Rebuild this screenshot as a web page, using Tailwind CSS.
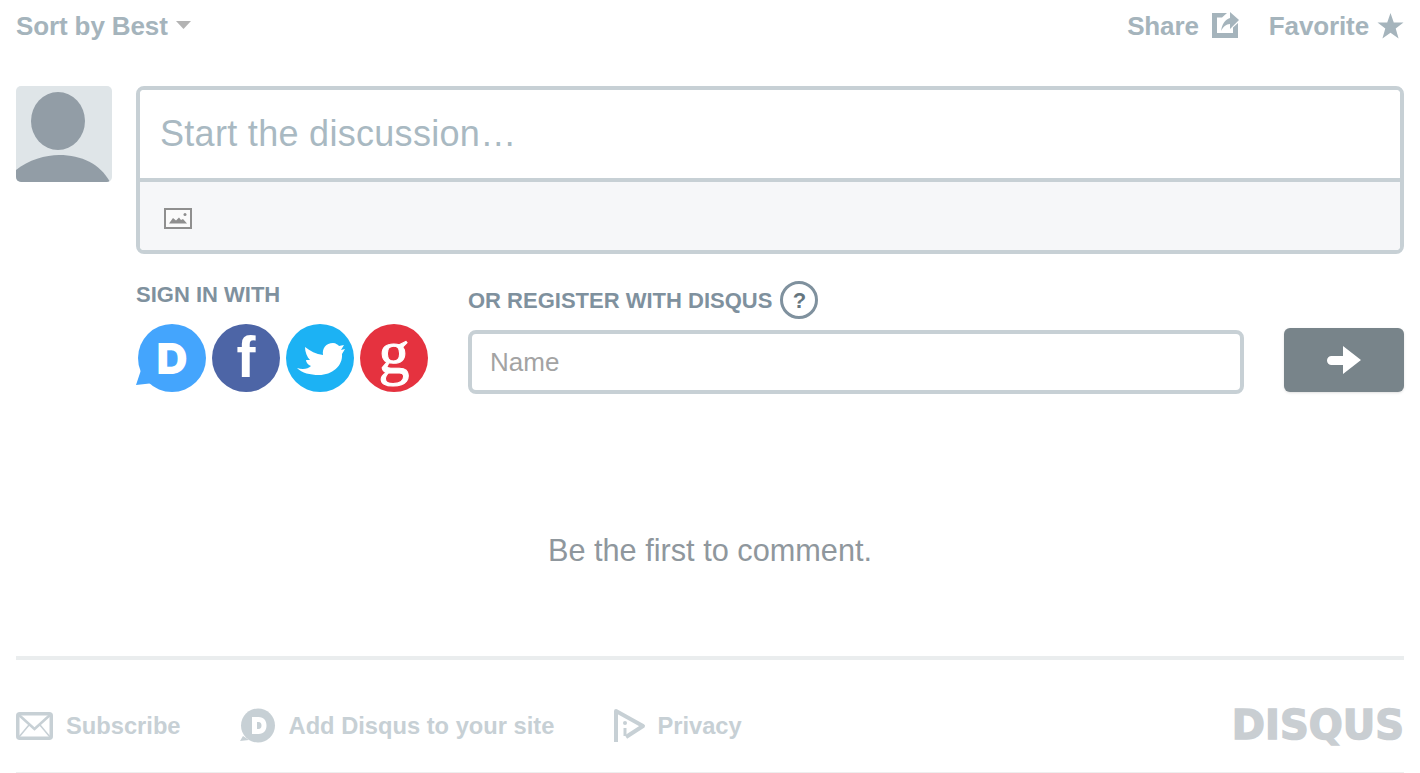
<!DOCTYPE html>
<html lang="en"><head><meta charset="utf-8"><title>Disqus</title>
<script src="https://cdn.jsdelivr.net/npm/@tailwindcss/browser@4"></script></head>
<body class="bg-white h-[773px] overflow-hidden font-['Liberation_Sans',Arial,sans-serif]">
<div class="px-4 w-[1420px] h-[773px] flex flex-col">
  <!-- top nav -->
  <div class="flex justify-between items-center h-[50px] pt-[1px] shrink-0 text-[26px] leading-[30px] font-bold text-[#a5b4bc] mb-9 tracking-[-0.12px]">
    <div class="flex items-center gap-[8px]"><span>Sort by Best</span><svg class="mt-[-1px]" width="15" height="8" viewBox="0 0 15 8"><path d="M0 0H15L7.500 8Z" fill="#b3b3b3"/></svg></div>
    <div class="flex items-center">
      <span>Share</span>
      <svg class="ml-[13px] mt-[-2px]" width="27" height="26" viewBox="0 0 27 26" fill="#a5b4bc"><path d="M0 1H15L10 5.500H5V21H21V15.500L26 11V26H0Z"/><path d="M18 0L27 8L18 17V12C14 12 11 15 9 19C10 12 13 7.500 18 6Z"/></svg>
      <span class="ml-[30px]">Favorite</span>
      <svg class="ml-[8px]" width="27" height="26" viewBox="0 0 28 27" fill="#a5b4bc"><path d="M14 0L17.400 9.800H27.500L19.400 16.200L22.400 26.500L14 20.500L5.600 26.500L8.600 16.200L.5 9.800H10.600Z"/></svg>
    </div>
  </div>
  <!-- composer -->
  <div class="flex gap-6 shrink-0">
    <div class="w-24 h-24 rounded-[5px] bg-[#dfe5e8] overflow-hidden shrink-0">
      <svg width="96" height="96" viewBox="0 0 96 96" fill="#929da6"><ellipse cx="42" cy="35" rx="27" ry="29"/><path d="M0 84C12 74 30 69 43 69C66 69 84 78 94 96H0Z"/></svg>
    </div>
    <div class="flex-1 min-w-0">
      <div class="border-4 border-[#c7d0d5] rounded-[8px] h-[168px] flex flex-col overflow-hidden">
        <div class="bg-white border-b-4 border-[#c7d0d5] box-content h-[88px] flex items-center pl-5 text-[36px] text-[#a9b9c2] leading-none tracking-[0.3px]">Start the discussion…</div>
        <div class="flex-1 bg-[#f6f7f9] flex items-center pl-[24px] pt-1">
          <svg width="28" height="21" viewBox="0 0 28 21"><rect x="1" y="1" width="26" height="19" fill="#fbfbfb" stroke="#8f8f8f" stroke-width="2"/><path d="M5 15.500L9 10L12 12.500L15 9.500L17 12L19 11L23 15.500Z" fill="#8f8f8f"/><circle cx="21" cy="6.500" r="1.500" fill="#8f8f8f"/></svg>
        </div>
      </div>
      <div class="flex mt-[24px]">
        <div class="w-[332px] shrink-0">
          <div class="text-[22px] leading-[32px] font-bold text-[#7f919e] h-[45px] mt-px">SIGN IN WITH</div>
          <div class="flex gap-1.5 pl-0.5">
            <div class="relative w-[68px] h-[68px] rounded-full bg-[#44a5fd] text-white flex items-center justify-center font-['Inter',sans-serif] font-black text-[43px] leading-none">
              <svg class="absolute left-[-2px] bottom-[6px]" width="20" height="16" viewBox="0 0 20 16" fill="#44a5fd"><path d="M5 0L0 15L18 13Z"/></svg>
              <span class="relative">D</span>
            </div>
            <div class="w-[68px] h-[68px] rounded-full bg-[#4d65a6] text-white flex items-center justify-center font-bold text-[57px] leading-none pb-[1px]">f</div>
            <div class="w-[68px] h-[68px] rounded-full bg-[#1cb2f4]">
              <svg width="68" height="68" viewBox="0 0 68 68" fill="#fff"><path d="M11 44C17 46 22 45 25 42C22 41 20 38 20 36C21 36 22 36 24 36C21 33 19 28 19 23C24 27 30 30 37 31C36 24 40 19 47 19C50 19 52 21 53 22L58 21L55 26L59 25L56 30C57 42 46 51 33 51C24 51 16 49 11 44Z"/></svg>
            </div>
            <div class="w-[68px] h-[68px] rounded-full bg-[#e5323f] text-white flex items-center justify-center font-['Liberation_Serif',serif] font-normal text-[62px] leading-none pb-3 [-webkit-text-stroke:1px_white]">g</div>
          </div>
        </div>
        <div class="flex-1 min-w-0 pt-[5px]">
          <div class="flex items-center h-[34px] text-[22px] font-bold text-[#7f919e]">OR REGISTER WITH DISQUS
            <span class="ml-2 w-[38px] h-[38px] rounded-full border-[3.500px] border-[#7f919e] flex items-center justify-center text-[22px] text-[#66767f]">?</span>
          </div>
          <div class="flex gap-10 mt-[11px]">
            <div class="flex-1 h-[64px] mt-0.5 border-4 border-[#c7d0d5] rounded-[8px] flex items-center pl-[18px] text-[26px] text-[#a3a3a3] bg-white">Name</div>
            <div class="w-[120px] h-[64px] rounded-[6px] bg-[#78848a] flex items-center justify-center shadow-sm">
              <svg width="34" height="28" viewBox="0 0 34 28" fill="#fff"><path d="M16 0L34 14L16 28V19H4.500A4.500 4.500 0 0 1 4.500 10H16Z"/></svg>
            </div>
          </div>
        </div>
      </div>
    </div>
  </div>
  <!-- empty -->
  <div class="text-center text-[30.700px] leading-[36px] text-[#8f979d] mt-[139px]">Be the first to comment.</div>
  <!-- footer -->
  <div class="mt-[87px] border-t-4 border-[#eaedee] h-[116px] pt-5 shrink-0 flex items-center justify-between text-[#c7d0d5] text-[23.700px] font-bold">
    <div class="flex items-center">
      <svg width="37" height="28" viewBox="0 0 37 28" fill="none" stroke="#c7d0d5"><rect x="1.750" y="1.750" width="33.500" height="24.500" rx="2" stroke-width="3.500"/><path d="M3 3L18.500 17L34 3" stroke-width="2.500"/><path d="M3 25L13 13M34 25L24 13" stroke-width="1.500"/></svg>
      <span class="ml-[13px] mt-[2px]">Subscribe</span>
      <svg class="ml-[59px]" width="36" height="36" viewBox="0 0 36 36"><circle cx="18" cy="17.500" r="17" fill="#c7d0d5"/><path d="M3 28L0 33L9 32Z" fill="#c7d0d5"/><path d="M12 9H18.500C24 9 26.500 13 26.500 17.500C26.500 22 24 26 18.500 26H12ZM17 14V21H18.500C20.500 21 21.500 19.500 21.500 17.500C21.500 15.500 20.500 14 18.500 14Z" fill="#fff" fill-rule="evenodd"/></svg>
      <span class="ml-[13px] mt-[2px]">Add Disqus to your site</span>
      <svg class="ml-[60px]" width="32" height="36" viewBox="0 0 32 36" fill="none" stroke="#c7d0d5" stroke-width="4"><path d="M2 34V3L29 18L12 29" stroke-linejoin="round"/><path d="M11 20V28" stroke-width="3"/><circle cx="11" cy="15" r="2" fill="#c7d0d5" stroke="none"/></svg>
      <span class="ml-[11px] mt-[2px]">Privacy</span>
    </div>
    <span class="font-['DejaVu_Sans',sans-serif] font-bold text-[40px] leading-none text-[#c9ced2] [-webkit-text-stroke:1.500px_#c9ced2] mt-[-2px]">DISQUS</span>
  </div>
  <div class="h-px bg-[#eeeeee] shrink-0"></div>
</div>
</body></html>
